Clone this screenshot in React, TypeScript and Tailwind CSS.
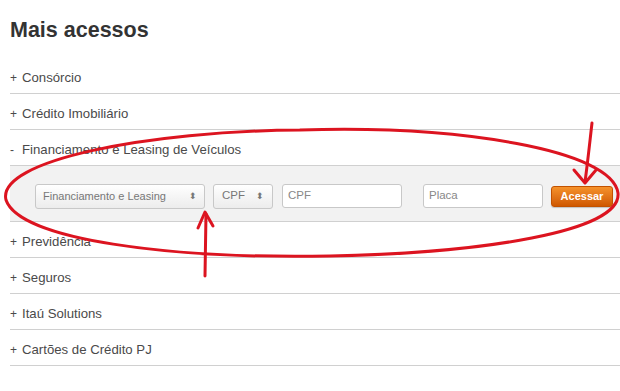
const items = ["Consórcio", "Crédito Imobiliário"];
const after = ["Previdência", "Seguros", "Itaú Solutions", "Cartões de Crédito PJ"];

function Row({ label, sign = "+" }: { label: string; sign?: string }) {
  return (
    <div className="flex items-center h-[36px] pt-[4px] border-b border-[#d0d0d0] text-[13.2px] text-[#4a4a4a]">
      <span className="w-[12px] text-[12px]">{sign}</span>
      <span>{label}</span>
    </div>
  );
}

function Arrows() {
  return (
    <svg className="absolute inset-0 pointer-events-none" width="620" height="391" viewBox="0 0 620 391">
      <g fill="none" stroke="#dc1420" strokeWidth="3" strokeLinecap="round" strokeLinejoin="round">
        <path d="M300 130 C 460 125, 612 150, 618 193 C 622 232, 480 253, 330 256 C 170 259, 20 240, 6 200 C -4 160, 150 131, 300 130" />
        <path d="M205 276 L206 214" />
        <path d="M198 228 L205 212 L213 226" />
        <path d="M592 123 C 590 140, 588 160, 585 182" />
        <path d="M574 170 L585 183 L596 170" />
      </g>
    </svg>
  );
}

export default function App() {
  return (
    <div className="relative w-[620px] h-[391px] bg-white overflow-hidden" style={{ fontFamily: "'Liberation Sans', Arial, sans-serif" }}>
      <div className="pl-[10px] pt-[15px]">
        <h1 className="text-[21.5px] font-bold text-[#333] leading-[30px]">Mais acessos</h1>
        <div className="mt-[13px]">
          {items.map((t) => (
            <Row key={t} label={t} />
          ))}
          <Row label="Financiamento e Leasing de Veículos" sign="-" />
          <div className="flex items-center h-[56px] bg-[#f2f2f2] border-b border-[#d0d0d0] pl-[25px] pt-[5px]">
            <div className="flex items-center justify-between w-[170px] h-[25px] px-[7px] rounded-[3px] border border-[#c8c8c8] bg-gradient-to-b from-white to-[#ececec] text-[#777] text-[11px]">
              <span>Financiamento e Leasing</span>
              <span className="text-[9px] leading-none">⬍</span>
            </div>
            <div className="flex items-center justify-between w-[60px] h-[25px] ml-[8px] px-[8px] rounded-[3px] border border-[#c8c8c8] bg-gradient-to-b from-white to-[#ececec] text-[#777] text-[11.5px]">
              <span>CPF</span>
              <span className="text-[9px] leading-none">⬍</span>
            </div>
            <div className="flex items-center w-[120px] h-[24px] ml-[9px] px-[5px] rounded-[3px] border border-[#c8c8c8] bg-white text-[#888] text-[11.5px]">
              CPF
            </div>
            <div className="flex items-center w-[120px] h-[24px] ml-[21px] px-[5px] rounded-[3px] border border-[#c8c8c8] bg-white text-[#888] text-[11.5px]">
              Placa
            </div>
            <div className="flex items-center justify-center w-[62px] h-[21px] ml-[8px] rounded-[3px] bg-gradient-to-b from-[#f5922a] to-[#cf5800] border border-[#c25200] text-white font-bold text-[11px] shadow-[0_1px_1px_rgba(0,0,0,0.2)]">
              Acessar
            </div>
          </div>
          {after.map((t) => (
            <Row key={t} label={t} />
          ))}
        </div>
      </div>
      <Arrows />
    </div>
  );
}
